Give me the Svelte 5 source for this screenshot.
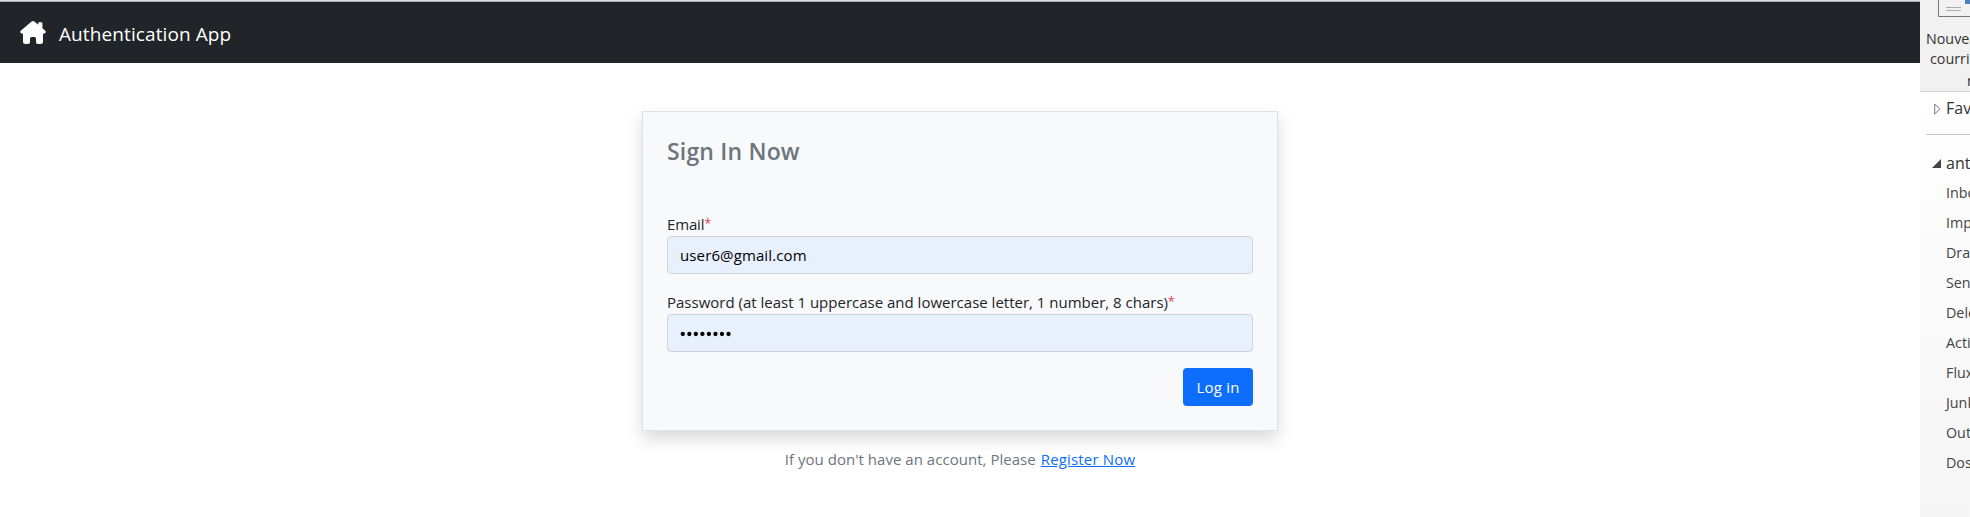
<script>
  const folders = ['Inbo', 'Imp', 'Dra', 'Sen', 'Dele', 'Acti', 'Flux', 'Junk', 'Out', 'Dos'];
</script>

<div class="screen">
  <div class="app">
    <header>
      <svg class="home" viewBox="0 0 26 24" width="26" height="24">
        <path d="M11.3.7Q13-.7 14.7.7L18.2 3.7V2.2Q18.2 1.2 19.2 1.2H21.4Q22.4 1.2 22.4 2.2V7.3L25.3 9.8Q26.3 11.3 25 12.2Q24.4 12.8 23 12.6V20.5Q23 23 20.5 23H18Q16 23 16 21V17.5Q16 16 14.5 16H11.5Q10 16 10 17.5V21Q10 23 8 23H5.5Q3 23 3 20.5V12.6Q1.6 12.8 1 12.2Q-.3 11.3.7 9.8Z" />
      </svg>
      <span class="brand">Authentication App</span>
    </header>
    <main>
      <form class="card">
        <h1>Sign In Now</h1>
        <label for="email"><span class="email">Email</span><span class="star">*</span></label>
        <input id="email" type="text" value="user6@gmail.com" />
        <label for="password"><span class="rule">Password (at least 1 uppercase and lowercase letter, 1 number, 8 chars)</span><span class="star">*</span></label>
        <div class="field"><svg width="52" height="6" viewBox="0 0 52 6">{#each Array(8) as _, i}<circle cx={2.8 + i * 6.53} cy="3" r="2.15" />{/each}</svg></div>
        <button type="button">Log in</button>
      </form>
      <p><span class="ask">If you don't have an account, Please</span><a href="#register">Register Now</a></p>
    </main>
  </div>
  <aside>
    <div class="ribbon">
      <svg width="50" height="17" viewBox="0 0 50 17">
        <path d="M18.5 0V16.5H52" fill="none" stroke="#777" />
        <path d="M26 7.5H41M26 10.5H41" stroke="#aaa" />
        <path d="M45 0H52V4H45Z" fill="#4a7fbd" />
      </svg>
      <div class="new">Nouvea</div>
      <div class="new mail">courrie</div>
      <div class="new last">n</div>
    </div>
    <div class="fav"><svg width="7" height="12" viewBox="0 0 7 12"><path d="M.7 1V11L5.8 6Z" fill="none" stroke="#777" /></svg><span>Fav</span></div>
    <hr />
    <div class="account"><svg width="9" height="9" viewBox="0 0 9 9"><path d="M9 0V9H0Z" fill="#444" /></svg><span>ant</span></div>
    {#each folders as folder}<div class="folder">{folder}</div>{/each}
  </aside>
</div>

<style>
  :global(body) { margin: 0; overflow: hidden; background: #fff; }
  * { box-sizing: border-box; }
  .screen { display: flex; width: 1970px; height: 517px; overflow: hidden; font-family: "Open Sans", "Noto Sans", sans-serif; font-size: 15px; color: #212529; }
  .app { width: 1920px; flex: none; border-top: 1px solid #dfe3e5; }
  header { height: 62px; border-top: 1px solid #a5abae; background: #212529; display: flex; align-items: center; padding-left: 20px; color: #fff; }
  .home { fill: #fff; margin-top: 1px; }
  .brand { margin-left: 13px; font-size: 19px; line-height: 30px; padding-top: 3px; white-space: nowrap; letter-spacing: .1px; }
  main { padding-top: 48px; display: flex; flex-direction: column; align-items: center; }
  .card { width: 636px; height: 320px; padding: 25px 24px 24px; display: flex; flex-direction: column; background: #f8f9fa; border: 1px solid #dee2e6; box-shadow: 0 8px 16px rgba(0, 0, 0, .15); }
  h1 { margin: 0 0 46px; font-size: 23px; line-height: 29px; font-weight: 600; color: #6c757d; letter-spacing: .18px; }
  label { display: block; height: 24px; line-height: 24px; white-space: nowrap; }
  .email { letter-spacing: -.15px; }
  .star { color: #dc3545; font-size: 12px; line-height: 1; position: relative; top: -2px; }
  input, .field { width: 586px; height: 38px; flex: none; margin: 0 0 16px; padding: 0 12px; border: 1px solid #ced4da; border-radius: 4px; background: #e8f0fe; color: #000; font: 15px "Open Sans", sans-serif; letter-spacing: .12px; outline: 0; }
  .field { display: flex; align-items: center; padding-top: 2px; }
  button { align-self: flex-end; flex: none; width: 70px; height: 38px; padding: 0; border: 0; border-radius: 4px; background: #0d6efd; color: #fff; font: 15px "Open Sans", sans-serif; letter-spacing: .2px; }
  p { margin: 16px 0 0; line-height: 24px; color: #6c757d; white-space: nowrap; display: flex; gap: 5px; }
  .ask { letter-spacing: .03px; }
  a { color: #0d6efd; text-decoration: underline; letter-spacing: .17px; }
  aside { width: 50px; flex: none; overflow: hidden; white-space: nowrap; background: linear-gradient(#fff 90px, #fcfcfc 200px, #f5f5f5 517px); font-size: 14.3px; color: #444; }
  .ribbon { height: 92px; background: #f1f1f1; border-bottom: 1px solid #d0d0d0; color: #333; }
  svg { display: block; flex: none; }
  .new { line-height: 20px; padding: 12px 0 0 6px; }
  .mail { padding: 0 0 0 10px; }
  .last { padding-left: 47px; padding-top: 2px; }
  .fav { display: flex; align-items: center; height: 34px; padding-left: 14px; gap: 5px; font-size: 16px; color: #333; }
  .fav span { margin-top: -2px; }
  hr { height: 1px; border: 0; background: #c8c8c8; margin: 8px 0 0 6px; }
  .account { display: flex; align-items: center; height: 43px; padding: 13px 0 0 12px; gap: 5px; font-size: 16px; color: #333; }
  .folder { height: 30px; line-height: 30px; padding-left: 26px; }
</style>
